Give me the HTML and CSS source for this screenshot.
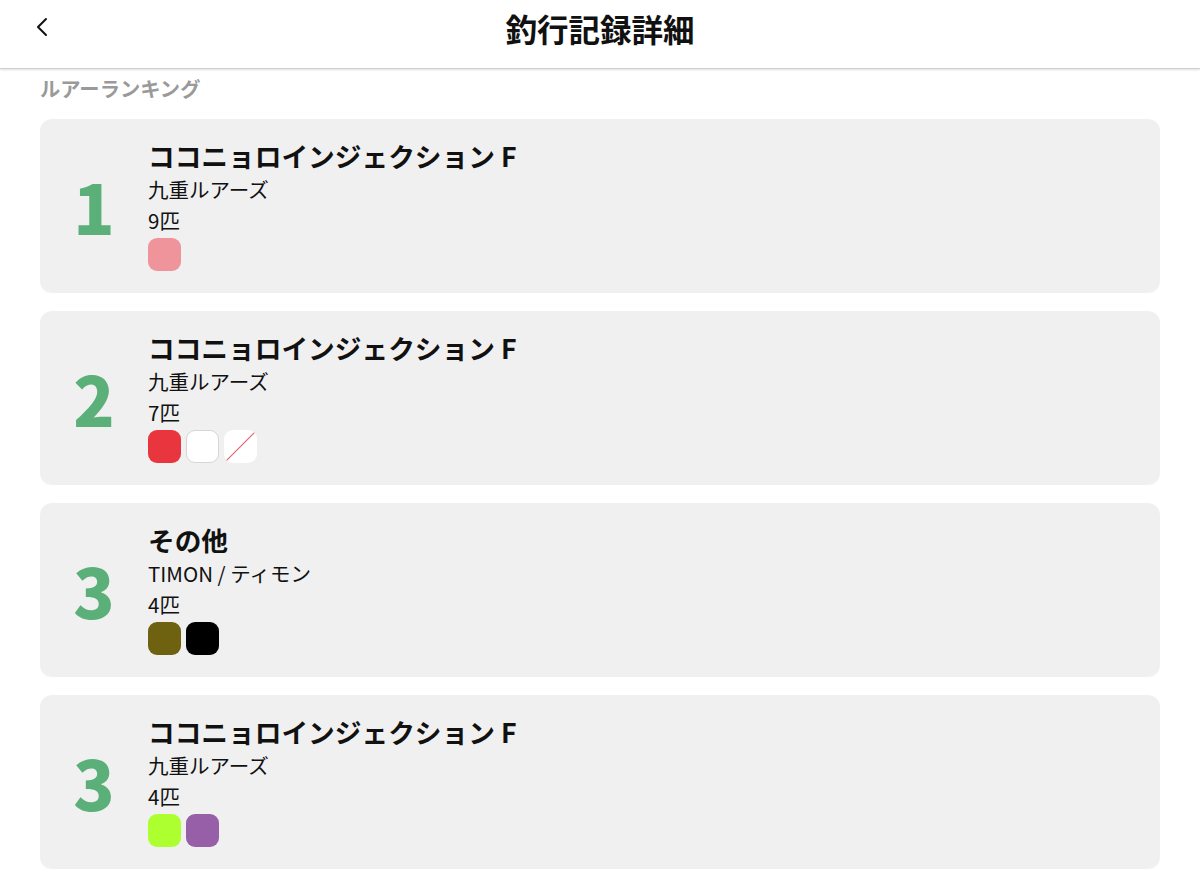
FILE: index.html
```html
<!DOCTYPE html>
<html lang="ja">
<head>
    <meta charset="UTF-8">
    <meta name="viewport" content="width=device-width, initial-scale=1.0">
    <title>釣行記録詳細</title>
    <link rel="stylesheet" href="styles.css">
</head>
<body>

    <header class="header">
        <button class="back-btn" aria-label="戻る">
            <svg width="16" height="22" viewBox="0 0 16 22">
                <path d="M12 3 L4 11 L12 19" fill="none" stroke="#111" stroke-width="2" stroke-linecap="round" stroke-linejoin="round"/>
            </svg>
        </button>
        <h1 class="header-title">釣行記録詳細</h1>
    </header>

    <main class="content">
        <h2 class="section-title">ルアーランキング</h2>

        <div class="ranking">
            <div class="card">
                <div class="rank">1</div>
                <div class="info">
                    <div class="lure-name">ココニョロインジェクション F</div>
                    <div class="maker">九重ルアーズ</div>
                    <div class="count">9匹</div>
                    <div class="swatches">
                        <span class="swatch pink"></span>
                    </div>
                </div>
            </div>

            <div class="card">
                <div class="rank">2</div>
                <div class="info">
                    <div class="lure-name">ココニョロインジェクション F</div>
                    <div class="maker">九重ルアーズ</div>
                    <div class="count">7匹</div>
                    <div class="swatches">
                        <span class="swatch red"></span>
                        <span class="swatch white"></span>
                        <span class="swatch none"></span>
                    </div>
                </div>
            </div>

            <div class="card">
                <div class="rank">3</div>
                <div class="info">
                    <div class="lure-name">その他</div>
                    <div class="maker">TIMON / ティモン</div>
                    <div class="count">4匹</div>
                    <div class="swatches">
                        <span class="swatch olive"></span>
                        <span class="swatch black"></span>
                    </div>
                </div>
            </div>

            <div class="card">
                <div class="rank">3</div>
                <div class="info">
                    <div class="lure-name">ココニョロインジェクション F</div>
                    <div class="maker">九重ルアーズ</div>
                    <div class="count">4匹</div>
                    <div class="swatches">
                        <span class="swatch lime"></span>
                        <span class="swatch purple"></span>
                    </div>
                </div>
            </div>
        </div>
    </main>

</body>
</html>
```

FILE: styles.css
```css
body {
    font-family: 'Noto Sans CJK JP', 'Noto Sans', sans-serif;
    background: #fff;
    margin: 0;
    padding: 0;
    color: #111;
}

.header {
    position: relative;
    height: 68px;
    display: flex;
    justify-content: center;
    align-items: center;
    border-bottom: 1px solid #cfcfcf;
    box-shadow: 0 1px 2px rgba(0, 0, 0, 0.12);
}

.back-btn {
    position: absolute;
    left: 30px;
    top: 13px;
    background: none;
    border: none;
    padding: 0;
    width: 24px;
    height: 28px;
    display: flex;
    align-items: center;
    justify-content: center;
}

.header-title {
    margin: 0;
    font-size: 31.5px;
    font-weight: bold;
    line-height: 1;
    margin-top: -10px;
}

.content {
    padding: 4px 40px 20px;
}

.section-title {
    margin: 0 0 16px;
    font-size: 20.3px;
    line-height: 30px;
    font-weight: bold;
    color: #9a9a9a;
}

.ranking {
    display: flex;
    flex-direction: column;
    gap: 18px;
}

.card {
    background-color: #f0f0f0;
    border-radius: 12px;
    display: flex;
    height: 174px;
    box-sizing: border-box;
}

.rank {
    width: 108px;
    flex-shrink: 0;
    display: flex;
    justify-content: center;
    align-items: center;
    font-size: 68px;
    font-weight: 900;
    color: #5baf79;
    padding-bottom: 2px;
}

.info {
    padding-top: 20px;
}

.lure-name {
    font-size: 26.7px;
    font-weight: bold;
    line-height: 34px;
}

.maker {
    font-size: 20.5px;
    line-height: 32px;
}

.count {
    font-size: 20.5px;
    line-height: 31px;
}

.swatches {
    display: flex;
    gap: 5px;
    margin-top: 2px;
}

.swatch {
    width: 33px;
    height: 33px;
    border-radius: 9px;
    box-sizing: border-box;
}

.pink { background: #f0949c; }
.red { background: #e9353e; }
.white { background: #fff; border: 1px solid #d6d6d6; }
.none {
    background: linear-gradient(to bottom right, #fff calc(50% - 1px), #e06670 50%, #fff calc(50% + 1px));
}
.olive { background: #6e6210; }
.black { background: #000; }
.lime { background: #adff2f; }
.purple { background: #965fa8; }
```
